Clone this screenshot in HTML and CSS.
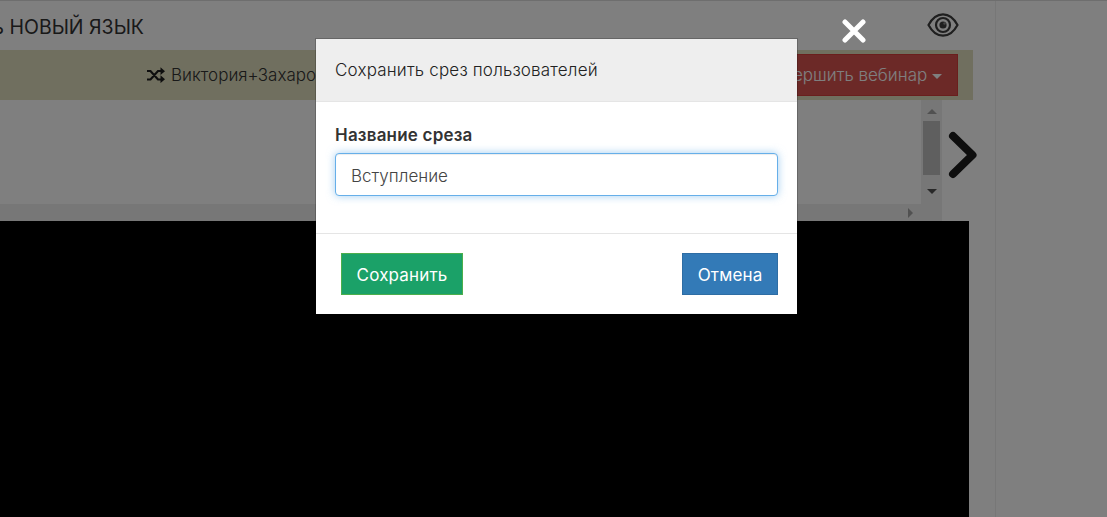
FILE: index.html
```html
<!DOCTYPE html>
<html lang="ru">
<head>
<meta charset="utf-8">
<title>Сохранить срез пользователей</title>
<link rel="stylesheet" href="styles.css">
</head>
<body>
<div class="page">
  <div class="main">
    <header class="top">
      <h1 class="title">Добавить НОВЫЙ ЯЗЫК</h1>
      <svg class="eye" viewBox="0 0 32 24" width="32" height="24" aria-hidden="true">
        <path d="M1.500 12C5.500 4.500 10.500 1.300 16 1.300S26.500 4.500 30.500 12C26.500 19.500 21.500 22.700 16 22.700S5.500 19.500 1.500 12Z" fill="none" stroke="#3e3e3e" stroke-width="2.200"/>
        <circle cx="16" cy="12" r="7" fill="none" stroke="#3e3e3e" stroke-width="2.200"/>
        <circle cx="16" cy="12" r="3.600" fill="#3e3e3e"/>
        <circle cx="17.500" cy="10.500" r="1.200" fill="#8a8a8a"/>
      </svg>
    </header>
    <div class="bar">
      <div class="bar-info">
        <svg class="shuffle" viewBox="0 0 18 16" width="18" height="16" aria-hidden="true">
          <path d="M0 4h3.500l7.500 8.500h3M0 12.500h3.500l7.500-8.500h3" fill="none" stroke="#1d1d1d" stroke-width="2.200"/>
          <path d="M13.500 0.300 18 4.200l-4.500 3.900ZM13.500 8.300 18 12.200l-4.500 3.900Z" fill="#1d1d1d"/>
        </svg>
        <span>Виктория+Захарова</span>
      </div>
      <button class="finish">Завершить вебинар <span class="caret"></span></button>
    </div>
    <div class="scroller">
      <div class="scroll-body">
        <div class="scroll-content"></div>
        <div class="hbar"><span class="arrow-right"></span></div>
      </div>
      <div class="vbar">
        <span class="arrow-up"></span>
        <span class="thumb"></span>
        <span class="arrow-down"></span>
      </div>
      <svg class="next" viewBox="0 0 30 48" width="30" height="48" aria-hidden="true">
        <path d="M5 5 24.500 24 5 43" fill="none" stroke="#1c1c1c" stroke-width="8" stroke-linecap="round" stroke-linejoin="round"/>
      </svg>
    </div>
    <div class="video"></div>
  </div>
  <aside class="side"></aside>
</div>

<div class="overlay">
  <svg class="close" viewBox="0 0 24 24" width="24" height="24" aria-hidden="true">
    <path d="M3 3 21 21M21 3 3 21" fill="none" stroke="#fff" stroke-width="5" stroke-linecap="round"/>
  </svg>
  <div class="modal">
    <div class="modal-head">Сохранить срез пользователей</div>
    <div class="modal-body">
      <label class="field-label" for="slice">Название среза</label>
      <input class="field" id="slice" type="text" value="Вступление">
    </div>
    <div class="modal-foot">
      <button class="btn btn-save">Сохранить</button>
      <button class="btn btn-cancel">Отмена</button>
    </div>
  </div>
</div>
</body>
</html>
```
FILE: styles.css
```css
* { box-sizing: border-box; }
html, body { margin: 0; height: 100%; overflow: hidden; }
body { font-family: Inter, "Noto Sans", sans-serif; color: #333; background: #fff; }

.page { display: flex; height: 517px; border-top: 1px solid #ddd; }
.main { width: 973px; flex: none; display: flex; flex-direction: column; }
.side { width: 111px; margin-left: 22px; flex: none; border-left: 1px solid #eee; }

.top { height: 49px; display: flex; align-items: center; justify-content: space-between; padding-right: 14px; }
.title { margin: 0 0 0 -89px; font-size: 19.500px; font-weight: 400; line-height: 1; white-space: nowrap; color: #333; padding-top: 4px; }
.eye { margin-bottom: 2px; }

.bar { height: 50px; background: #e1dfbe; display: flex; align-items: center; padding: 0 15px 0 147px; }
.bar-info { display: flex; align-items: center; gap: 6px; font-size: 17px; font-weight: 300; color: #333; }
.finish { margin-left: auto; height: 42px; width: 200px; background: #d9534f; border: 1px solid #d43f3a; color: #fff; font: 300 17px Inter, sans-serif; padding: 0 15px 0 0; text-align: right; white-space: nowrap; }
.caret { display: inline-block; border-top: 5px solid #fff; border-left: 5px solid transparent; border-right: 5px solid transparent; vertical-align: middle; margin-left: 0; }

.scroller { height: 121px; display: flex; }
.scroll-body { width: 921px; flex: none; display: flex; flex-direction: column; }
.scroll-content { flex: 1; }
.hbar { height: 17px; background: #eee; display: flex; align-items: center; justify-content: flex-end; padding-right: 8px; }
.arrow-right { border-left: 5px solid #a3a3a3; border-top: 5px solid transparent; border-bottom: 5px solid transparent; }
.vbar { width: 21px; flex: none; background: #eee; display: flex; flex-direction: column; align-items: center; padding-top: 9px; }
.arrow-up { border-bottom: 5px solid #a3a3a3; border-left: 5px solid transparent; border-right: 5px solid transparent; }
.thumb { width: 17px; height: 54px; background: #bebebe; margin-top: 7px; }
.arrow-down { border-top: 5px solid #505050; border-left: 5px solid transparent; border-right: 5px solid transparent; margin-top: 14px; }
.next { margin: 31px 0 0 6px; flex: none; }

.video { width: 969px; flex: 1; background: #000; }

.overlay { position: fixed; inset: 0; background: rgba(0, 0, 0, .5); }
.close { position: absolute; left: 842px; top: 19px; }
.modal { position: absolute; left: 315px; top: 38px; width: 483px; height: 277px; background: #fff; background-clip: padding-box; border: 1px solid rgba(0, 0, 0, .2); display: flex; flex-direction: column; }
.modal-head { height: 63px; background: #eee; border-bottom: 1px solid #e5e5e5; padding: 0 19px; display: flex; align-items: center; font-size: 17px; font-weight: 300; letter-spacing: .18px; color: #222; }
.modal-body { height: 132px; padding: 23px 19px 0; border-bottom: 1px solid #e5e5e5; }
.field-label { display: block; font-size: 17px; font-weight: 600; letter-spacing: .2px; line-height: 20px; color: #333; margin-bottom: 8px; }
.field { display: block; width: 443px; height: 43px; padding: 2px 15px 0; font: 300 17px Inter, sans-serif; color: #444; background: #fff; border: 1px solid #66afe9; border-radius: 4px; outline: none; box-shadow: inset 0 1px 1px rgba(0,0,0,.075), 0 0 8px rgba(102,175,233,.6); }
.modal-foot { flex: 1; display: flex; justify-content: space-between; align-items: flex-start; padding: 19px 19px 0 25px; }
.btn { height: 42px; border: 1px solid; color: #fff; font: 17px Inter, sans-serif; letter-spacing: .15px; padding: 2px 0 0; }
.btn-save { background: #1ba168; border-color: #4cae4c; width: 122px; }
.btn-cancel { background: #337ab7; border-color: #2e6da4; width: 96px; }
```
